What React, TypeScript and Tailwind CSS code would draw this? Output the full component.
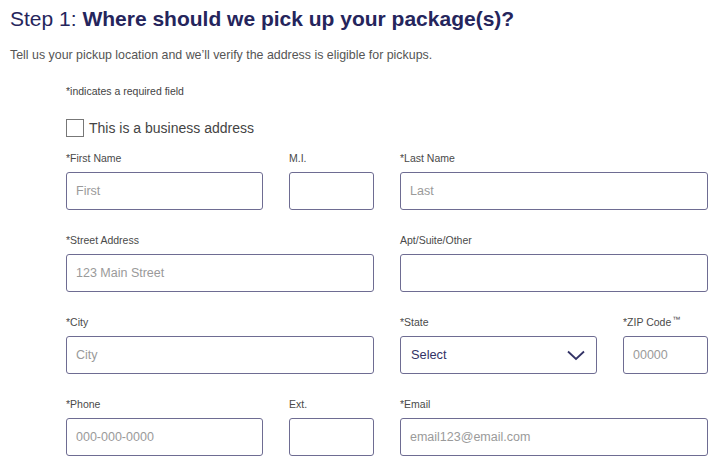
import React from "react";

const font = { fontFamily: '"Liberation Sans", Arial, sans-serif' };

function Label({ children }: { children: React.ReactNode }) {
  return (
    <div className="h-[14px] text-[10.5px] leading-[14px] text-[#4a4a4a] whitespace-nowrap">
      {children}
    </div>
  );
}

function Input({ placeholder }: { placeholder?: string }) {
  return (
    <div className="mt-[7px] h-[38px] rounded-[3px] border border-[#6e6c92] bg-white flex items-center px-[9px] text-[12.5px] text-[#9a9a9a]">
      {placeholder}
    </div>
  );
}

function Field({
  label,
  placeholder,
  span,
}: {
  label: React.ReactNode;
  placeholder?: string;
  span?: string;
}) {
  return (
    <div className={span}>
      <Label>{label}</Label>
      <Input placeholder={placeholder} />
    </div>
  );
}

export default function App() {
  return (
    <div className="w-[720px] h-[472px] bg-white overflow-hidden" style={font}>
      <div className="pl-[10px] pt-[5px]">
        <h1 className="text-[21px] leading-[28px] text-[#25255c] whitespace-nowrap">
          Step 1: <span className="font-bold">Where should we pick up your package(s)?</span>
        </h1>
        <p className="mt-[14px] text-[12.4px] leading-[16px] text-[#555555]">
          Tell us your pickup location and we’ll verify the address is eligible for pickups.
        </p>
      </div>
      <div className="pl-[66px]">
        <div className="mt-[22px] text-[10.5px] leading-[12px] text-[#444444]">
          *indicates a required field
        </div>
        <div className="mt-[22px] flex items-center h-[18px]">
          <div className="w-[18px] h-[18px] border border-[#777777] bg-white" />
          <span className="ml-[5px] text-[14px] text-[#444444]">This is a business address</span>
        </div>
        <div className="mt-[14px] grid grid-cols-[197px_85px_197px_85px] gap-x-[26px] gap-y-[23px]">
          <Field label="*First Name" placeholder="First" />
          <Field label="M.I." />
          <Field label="*Last Name" placeholder="Last" span="col-span-2" />

          <Field label="*Street Address" placeholder="123 Main Street" span="col-span-2" />
          <Field label="Apt/Suite/Other" span="col-span-2" />

          <Field label="*City" placeholder="City" span="col-span-2" />
          <div>
            <Label>*State</Label>
            <div className="mt-[7px] h-[38px] rounded-[3px] border border-[#6e6c92] bg-white flex items-center justify-between pl-[10px] pr-[11px] text-[12.8px] text-[#333366]">
              <span>Select</span>
              <svg width="18" height="11" viewBox="0 0 18 11" fill="none">
                <path d="M1 1.5 L9 9 L17 1.5" stroke="#333366" strokeWidth="1.8" />
              </svg>
            </div>
          </div>
          <Field
            label={
              <span>
                *ZIP Code
                <span className="ml-[1px] text-[8px] relative -top-[4px]">™</span>
              </span>
            }
            placeholder="00000"
          />

          <Field label="*Phone" placeholder="000-000-0000" />
          <Field label="Ext." />
          <Field label="*Email" placeholder="email123@email.com" span="col-span-2" />
        </div>
      </div>
    </div>
  );
}
